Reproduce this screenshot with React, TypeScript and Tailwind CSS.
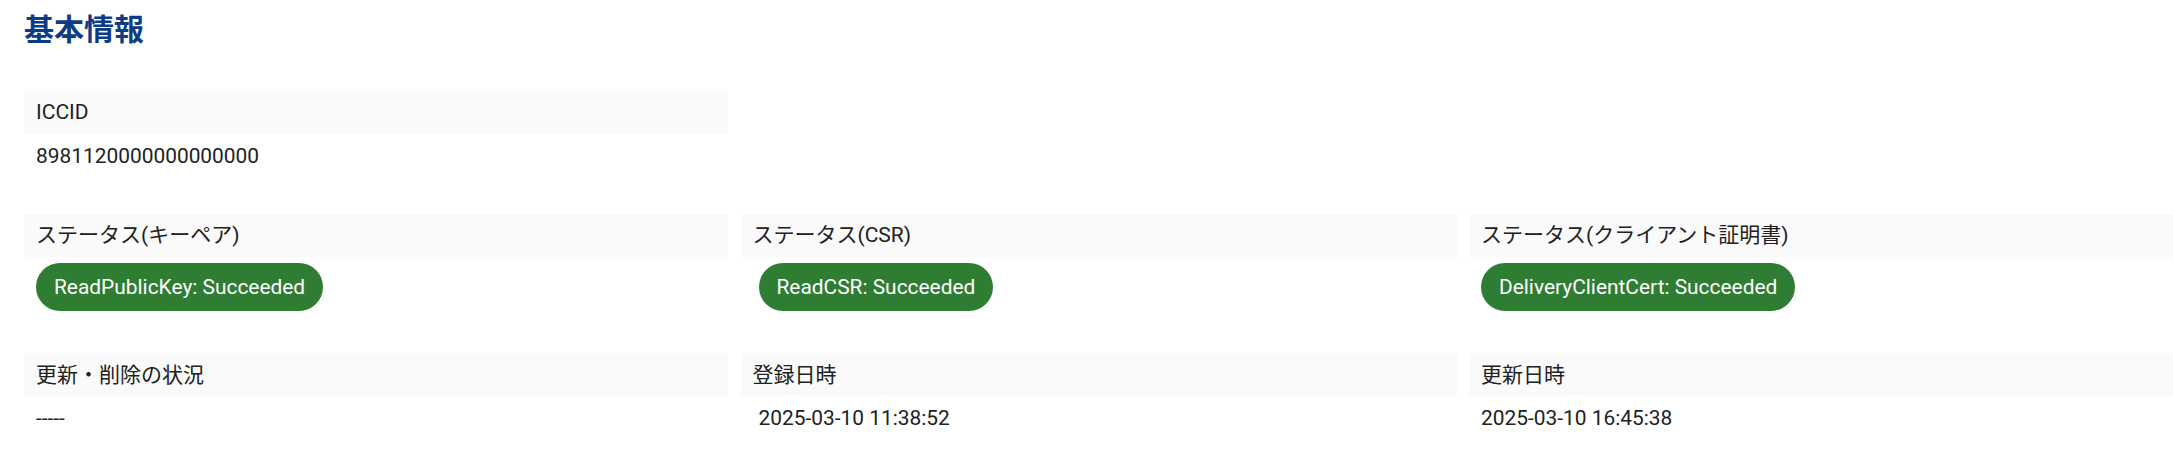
import type { FC, ReactNode } from 'react';

interface FieldProps {
  label: string;
  children?: ReactNode;
  indent?: boolean;
}

const Field: FC<FieldProps> = ({ label, children, indent }) => (
  <div className="flex flex-col">
    <div className="flex h-[42.67px] items-center bg-[#fafafa] px-[12px] text-[21px] leading-8 text-[#212121]">
      {label}
    </div>
    <div className={indent ? 'mt-[6.5px] pl-[18px]' : 'mt-[6.5px] pl-[12px]'}>{children}</div>
  </div>
);

const Value: FC<{ children: ReactNode }> = ({ children }) => (
  <div className="text-[20.9px] leading-8 text-[#212121]">{children}</div>
);

const StatusChip: FC<{ text: string }> = ({ text }) => (
  <span className="inline-flex h-[48px] items-center rounded-full bg-[#2e7d32] px-[18px] text-[20.9px] text-white">
    {text}
  </span>
);

const App: FC = () => {
  return (
    <div className="min-h-[466px] bg-white pl-[24px] pt-[12px] font-[Roboto,'Noto_Sans_CJK_JP',sans-serif]">
      <h1 className="mb-[43px] text-[30px] leading-[36px] font-bold text-[#0d3c87]">基本情報</h1>
      <div className="grid grid-cols-[704px_716px_1fr] gap-x-[12.5px] gap-y-[42px]">
        <Field label="ICCID">
          <Value>8981120000000000000</Value>
        </Field>
        <div />
        <div />

        <Field label="ステータス(キーペア)">
          <StatusChip text="ReadPublicKey: Succeeded" />
        </Field>
        <Field label="ステータス(CSR)" indent>
          <StatusChip text="ReadCSR: Succeeded" />
        </Field>
        <Field label="ステータス(クライアント証明書)">
          <StatusChip text="DeliveryClientCert: Succeeded" />
        </Field>

        <Field label="更新・削除の状況">
          <Value>-----</Value>
        </Field>
        <Field label="登録日時" indent>
          <Value>2025-03-10 11:38:52</Value>
        </Field>
        <Field label="更新日時">
          <Value>2025-03-10 16:45:38</Value>
        </Field>
      </div>
    </div>
  );
};

export default App;
